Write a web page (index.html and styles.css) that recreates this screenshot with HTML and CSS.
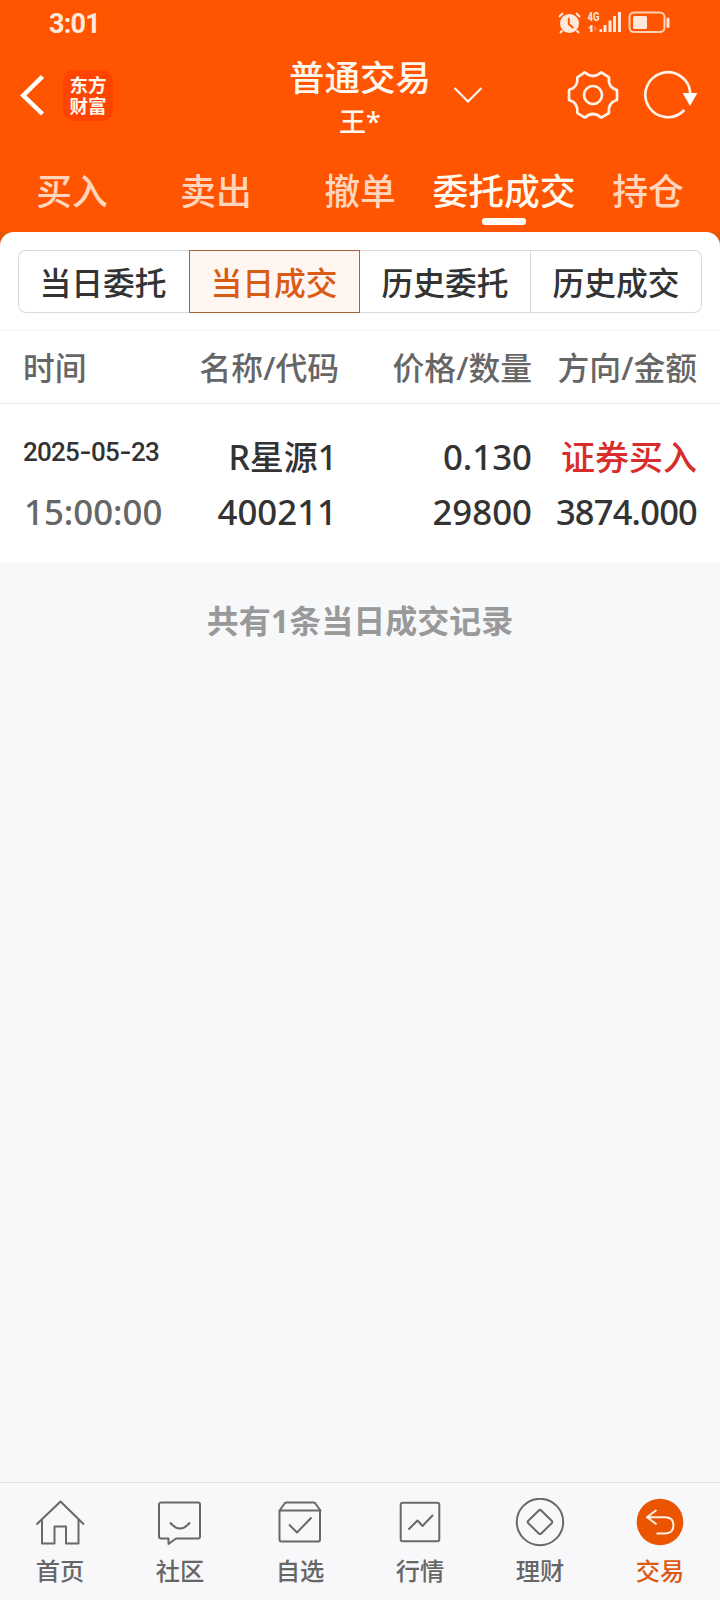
FILE: index.html
```html
<!DOCTYPE html>
<html lang="zh-CN">
<head>
<meta charset="utf-8">
<title>普通交易</title>
<link rel="stylesheet" href="styles.css">
</head>
<body>
<div class="app">
  <header class="header">
    <div class="status">
      <span class="clock">3:01</span>
      <svg class="status-icons" width="114" height="24" viewBox="0 0 114 24">
        <g fill="#ffe9dc">
          <circle cx="11.5" cy="12.500" r="9.500"/>
          <path d="M1 6 5 2M18 2l4 4M4.500 19.500 2 22M18.500 19.500 21 22" stroke="#ffe9dc" stroke-width="2"/>
          <path d="M10.800 7v6l4.500 4" fill="none" stroke="#ff5500" stroke-width="2"/>
          <rect x="41.500" y="18" width="2.500" height="3"/>
          <rect x="45.500" y="14" width="3" height="7"/>
          <rect x="50.500" y="9.500" width="3" height="11.500"/>
          <rect x="55" y="5" width="3" height="16"/>
          <rect x="60" y="1" width="3" height="20"/>
          <rect x="75" y="5" width="14" height="13" rx="1.500"/>
          <rect x="108.500" y="6.500" width="3" height="10.500" rx="1.500"/>
          <text class="net" x="29.500" y="9.800" textLength="12" lengthAdjust="spacingAndGlyphs">4G</text>
          <path d="M30 17.500 33 14h1.500v7h-2.300v-4z"/>
        </g>
        <path d="M36.500 14.500v6l2.500-3z" fill="#ff8a4d"/>
        <rect x="71.500" y="1.500" width="35" height="19.500" rx="4.500" fill="none" stroke="#ffd0b5" stroke-width="2"/>
      </svg>
    </div>
    <div class="bar">
      <div class="bar-left">
        <svg width="26" height="44" viewBox="0 0 26 44"><path d="M22.500 3.500 3.300 22.500l19.200 18.500" fill="none" stroke="#fff" stroke-width="4.500"/></svg>
        <div class="logo">东方<br>财富</div>
      </div>
      <div class="account">
        <div class="title">普通交易</div>
        <div class="user">王*</div>
      </div>
      <svg class="chevron" width="30" height="18" viewBox="0 0 30 18"><path d="M1.500 2 15 15.500 28.500 2" fill="none" stroke="#fff" stroke-width="2"/></svg>
      <div class="bar-right">
        <svg width="52" height="52" viewBox="81 207 156 156"><g fill="none" stroke="#fff3ea" stroke-width="8" stroke-linejoin="round"><path d="M112 232 134 217Q159 239 184 217L207 232Q203 262 231 270V300Q203 308 207 339L184 353Q159 331 134 353L112 339Q115 308 87 300V270Q115 262 112 232Z"/><circle cx="159" cy="285" r="27"/></g></svg>
        <svg width="56" height="52" viewBox="308 207 168 156"><path d="M432 330A67.500 67.500 0 1 1 450 282" fill="none" stroke="#fff3ea" stroke-width="8"/><path d="M427 279h44l-22 39z" fill="#fff"/></svg>
      </div>
    </div>
    <nav class="tabs">
      <span class="tab">买入</span>
      <span class="tab">卖出</span>
      <span class="tab">撤单</span>
      <span class="tab tab-on">委托成交</span>
      <span class="tab">持仓</span>
    </nav>
  </header>
  <div class="panel-back">
    <main class="panel">
      <div class="segments">
        <span class="segment">当日委托</span>
        <span class="segment segment-on">当日成交</span>
        <span class="segment">历史委托</span>
        <span class="segment">历史成交</span>
      </div>
      <div class="row row-head">
        <span>时间</span><span>名称/代码</span><span>价格/数量</span><span>方向/金额</span>
      </div>
      <div class="row row-record">
        <div class="cell"><span class="date">2025<i class="dash">-</i>05<i class="dash">-</i>23</span><span class="time">15:00:00</span></div>
        <div class="cell cell-name"><span class="name">R星源1</span><span>400211</span></div>
        <div class="cell"><span>0.130</span><span>29800</span></div>
        <div class="cell"><span class="buy">证券买入</span><span class="amount">3874.000</span></div>
      </div>
    </main>
  </div>
  <p class="summary">共有1条当日成交记录</p>
  <footer class="nav">
    <div class="nav-item">
      <svg class="nav-icon" viewBox="0 0 50 50"><path d="M1.500 26.500 25.500 3.500l23.500 23M7 22v23.500h12.500v-17H31v17h12.500V22"/></svg>
      <span>首页</span>
    </div>
    <div class="nav-item">
      <svg class="nav-icon" viewBox="0 0 50 50"><path d="M6 4.500h37a2 2 0 0 1 2 2v32a2 2 0 0 1-2 2H21l-7.500 5.500v-5.500H6a2 2 0 0 1-2-2v-32a2 2 0 0 1 2-2zM15 24.500q10 12 20 0"/></svg>
      <span>社区</span>
    </div>
    <div class="nav-item">
      <svg class="nav-icon" viewBox="0 0 50 50"><path d="M4.500 12.500 10 5q.5-.5 1.500-.5h27q1 0 1.500.5l5.500 7.500zM4.500 12.500v29q0 2 2 2h36.500q2 0 2-2v-29M14 26.500l8 8 14.500-15"/></svg>
      <span>自选</span>
    </div>
    <div class="nav-item">
      <svg class="nav-icon" viewBox="0 0 50 50"><rect x="5.700" y="4.700" width="38.600" height="38.600" rx="2"/><path d="M13.500 31.500l9-9 5 5.500 10.500-11"/></svg>
      <span>行情</span>
    </div>
    <div class="nav-item">
      <svg class="nav-icon" viewBox="0 0 50 50"><circle cx="25" cy="24" r="23.200"/><path d="M23.800 12.500q1.200-1.200 2.400 0l10.500 10.300q1.200 1.200 0 2.400l-10.500 10.300q-1.200 1.200-2.400 0l-10.500-10.300q-1.200-1.200 0-2.400z"/></svg>
      <span>理财</span>
    </div>
    <div class="nav-item nav-on">
      <svg class="nav-icon" viewBox="0 0 50 50"><circle cx="25" cy="24" r="23.300" fill="#eb5502" stroke="none"/><path d="M21.500 12 12 19.300l9.500 7M12 19.300H30q8.500 0 8.500 8t-8.500 8.200h-8.500" stroke="#fff0e5"/></svg>
      <span>交易</span>
    </div>
  </footer>
</div>
</body>
</html>
```
FILE: styles.css
```css
* { box-sizing: border-box; }

body {
  margin: 0;
  background: #f7f8fa;
  color: #333;
  font-family: "Noto Sans", "Noto Sans CJK SC", sans-serif;
  font-weight: 500;
}

svg { display: block; flex: none; }

.app {
  display: flex;
  flex-direction: column;
  width: 720px;
  height: 1600px;
}

.header {
  height: 232px;
  background: #ff5500;
  color: #fff8f0;
}

.status {
  display: flex;
  align-items: center;
  justify-content: space-between;
  height: 46px;
  padding: 0 49px;
}

.clock {
  padding-top: 2px;
  color: #ffe9dc;
  font: 700 27px/46px Roboto, sans-serif;
  letter-spacing: -0.8px;
}

.status-icons { margin-right: -1px; }

.net { font: 700 12px Roboto, sans-serif; }

.bar {
  display: grid;
  grid-template-columns: 288px 144px 110px 178px;
  height: 98px;
}

.bar-left {
  display: flex;
  align-items: center;
  gap: 17px;
  padding: 0 0 0 20px;
}

.logo {
  width: 50px;
  height: 51px;
  padding-top: 4px;
  border-radius: 11px;
  background: #ff4400;
  font: 700 18.5px/21.5px "Noto Sans CJK SC", sans-serif;
  text-align: center;
}

.account { text-align: center; white-space: nowrap; }
.title { padding-top: 6px; font-size: 35.500px; line-height: 50px; }
.user { margin-top: 3px; font-size: 27px; line-height: 34px; }
.chevron { margin: 40px 0 0 21px; }

.bar-right {
  display: flex;
  align-items: center;
  gap: 24px;
  padding-left: 25px;
}

.tabs {
  display: grid;
  grid-template-columns: repeat(5, 1fr);
  height: 88px;
}

.tab {
  display: flex;
  flex-direction: column;
  align-items: center;
  padding-top: 20px;
  color: #ffd6bd;
  font-size: 35.800px;
  line-height: 54px;
  white-space: nowrap;
}

.tab-on { color: #fffaf0; }
.tab-on::after {
  content: "";
  width: 44px;
  height: 7px;
  border-radius: 3px;
  background: #fffdf6;
}

.panel-back { background: linear-gradient(#e6570c 20px, #f7f8fa 20px); }

.panel {
  height: 331px;
  padding-top: 18px;
  border-radius: 14px 14px 0 0;
  background: #fff;
}

.segments {
  display: grid;
  grid-template: 63px / repeat(4, 171px);
  width: 684px;
  height: 63px;
  margin-left: 18px;
}

.segment {
  border: 1px solid #d6dadc;
  border-left-width: 0;
  font-size: 31.800px;
  line-height: 63px;
  text-align: center;
}
.segment:first-child {
  border-left-width: 1px;
  border-right-width: 0;
  border-radius: 8px 0 0 8px;
  text-indent: -2px;
}
.segment:last-child { border-radius: 0 8px 8px 0; }
.segments .segment-on {
  border: 1px solid #ab6434;
  background: #fff6f2;
  color: #d95c14;
  text-indent: -1px;
}

.row {
  display: grid;
  grid-template-columns: 165px 150px 193px 165px;
  padding: 0 24px;
}
.row > :not(:first-child) { text-align: right; }

.row-head {
  height: 74px;
  margin-top: 17px;
  padding-left: 23px;
  grid-template-columns: 166px 150px 193px 165px;
  border-top: 1px solid #f4f4f4;
  border-bottom: 1px solid #e9e9eb;
  color: #666;
  font-size: 31.800px;
  line-height: 73px;
  white-space: nowrap;
}

.row-record { padding-top: 26px; font-size: 34.800px; line-height: 54.500px; }
.cell { display: flex; flex-direction: column; }
.cell-name { padding-right: 2px; }
.name { font-size: 34px; letter-spacing: -0.100px; }
.date {
  font: 500 26px/45px Roboto, sans-serif;
  height: 54.500px;
  margin-left: -1px;
  letter-spacing: -0.800px;
}
.dash {
  display: inline-block;
  margin: 0 2px;
  font-style: normal;
  transform: scaleX(1.300);
}
.time { color: #666; }
.buy { font-size: 34px; color: #d92d2d; }
.amount { font-size: 34.500px; letter-spacing: -0.800px; }

.summary {
  flex: 1;
  margin: 0;
  padding-top: 35px;
  color: #999;
  font-size: 32px;
  font-weight: 700;
  line-height: 46px;
  text-align: center;
}

.nav {
  display: grid;
  grid-template-columns: repeat(6, 1fr);
  height: 118px;
  border-top: 1px solid #e1e1e4;
  background: #f8f8fb;
}

.nav-item {
  display: flex;
  flex-direction: column;
  align-items: center;
  padding-top: 15px;
  color: #666;
  font-size: 24.300px;
  line-height: 46px;
}

.nav-icon {
  width: 50px;
  height: 50px;
  fill: none;
  stroke: #686868;
  stroke-width: 2;
  stroke-linejoin: round;
}
.nav-on { color: #dc5a12; }
```
